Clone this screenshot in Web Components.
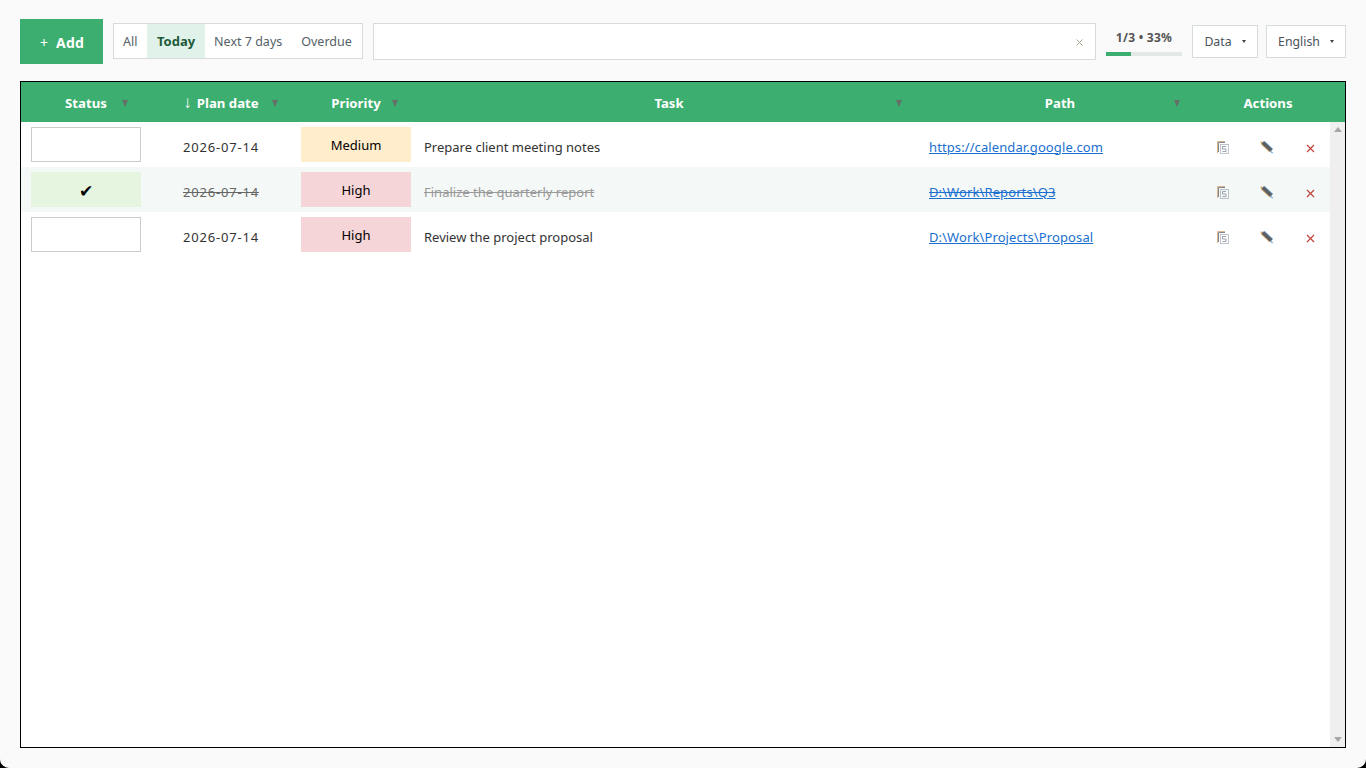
<!DOCTYPE html>
<html><head><meta charset="utf-8">
<style>
html,body{margin:0;height:100%;background:#000;overflow:hidden}
body{font:13px "Noto Sans","Open Sans",sans-serif;color:#333}
</style></head><body>
<todo-app></todo-app>
<template id="t-app"><style>
:host{display:flex;flex-direction:column;height:768px;box-sizing:border-box;background:#fafafa;padding:19px 20px 20px;border-radius:0 0 9px 9px;gap:17px}
.bar{display:flex;align-items:center;height:45px}
.add{width:83px;height:45px;background:#3cae6f;color:#fff;font-weight:700;font-size:14px;display:flex;align-items:center;justify-content:center;margin-right:10px;letter-spacing:.2px;padding:2px 0 0 1px;box-sizing:border-box;gap:8px}
.add span{font-weight:400}
.filters{display:flex;height:36px;box-sizing:border-box;border:1px solid #d6dbdb;background:#fff;margin-right:10px;margin-top:-1px;line-height:35px;font-size:12.5px;color:#555f66;width:250px}
.filters span{padding:0 9.5px;white-space:nowrap}
.filters span:first-child{padding:0 10px 0 9px}
.filters .on{background:#e0f2e9;color:#1d5a3a;font-weight:700;font-size:13px;padding:0 9.5px}
.search{width:723px;height:37px;box-sizing:border-box;border:1px solid #d6dbdb;background:#fff;margin-right:10px;display:flex;align-items:center;justify-content:flex-end;padding:2px 12px 0 0;margin-top:-1px}
.prog{width:76px;margin-right:10px;display:flex;flex-direction:column;align-items:center;margin-top:1px}
.prog b{font-size:12px;letter-spacing:.25px;color:#555;line-height:18px;margin-bottom:5px;font-weight:700;white-space:nowrap}
.track{width:76px;height:4px;background:#e3e8e6}.fill{width:25px;height:4px;background:#3cae6f}
.drop{height:33px;box-sizing:border-box;border:1px solid #d6dbdb;background:#fff;display:flex;align-items:center;justify-content:center;gap:10px;font-size:12.3px;color:#4a5258;margin-top:-1px;padding-top:1px}
.drop i{width:0;height:0;border:2px solid transparent;border-top:3px solid #444;border-bottom:0}
.d1{width:66px;margin-right:8px}.d2{width:80px}
</style>
<div class="bar">
<div class="add"><span>+</span>Add</div>
<div class="filters"><span>All</span><span class="on">Today</span><span>Next 7 days</span><span>Overdue</span></div>
<div class="search"><svg width="7" height="7" viewBox="0 0 7 7"><path d="M.5.5l6 6M6.500.5l-6 6" stroke="#a8a294" stroke-width="1" fill="none"/></svg></div>
<div class="prog"><b>1/3 • 33%</b><div class="track"><div class="fill"></div></div></div>
<div class="drop d1">Data<i></i></div>
<div class="drop d2">English<i></i></div>
</div>
<task-table></task-table>
</template>
<template id="t-table"><style>
:host{display:flex;flex-direction:column;height:667px;box-sizing:border-box;border:1px solid #000;background:#fff}
.head{display:grid;grid-template-columns:130px 140px 130px 496px 286px 130px;height:40px;background:#3cae6f;color:#fff;font-weight:700;font-size:13.2px;flex:none;width:1324px}
.head div{position:relative;display:flex;align-items:center;justify-content:center;padding-top:2px;box-sizing:border-box}
.head .arr{font-weight:400;font-size:17px;line-height:1;margin-right:5px;margin-top:-2px;font-family:"Liberation Sans",sans-serif}
.head i{position:absolute;top:18px;width:0;height:0;border:3.5px solid transparent;border-top:7px solid #646f69;border-bottom:0}
.body{flex:1;display:flex;min-height:0}
.rows{flex:1;min-width:0}
.sb{width:15px;background:#efefef;display:flex;flex-direction:column;justify-content:space-between;align-items:center;padding:5px 0;box-sizing:border-box}
.sb i{width:0;height:0;border:4px solid transparent}
.sb .u{border-bottom:5px solid #a6a6a6;border-top:0}.sb .d{border-top:5px solid #a6a6a6;border-bottom:0}
</style>
<div class="head">
<div>Status<i style="right:23px"></i></div>
<div><span class="arr">↓</span>Plan date<i style="right:13px"></i></div>
<div>Priority<i style="right:23px"></i></div>
<div>Task<i style="right:15px"></i></div>
<div>Path<i style="right:23px"></i></div>
<div>Actions</div>
</div>
<div class="body"><div class="rows">
<task-row date="2026-07-14" prio="Medium" task="Prepare client meeting notes" path="https://calendar.google.com"></task-row>
<task-row done date="2026-07-14" prio="High" task="Finalize the quarterly report" path="D:\Work\Reports\Q3"></task-row>
<task-row date="2026-07-14" prio="High" task="Review the project proposal" path="D:\Work\Projects\Proposal"></task-row>
</div><div class="sb"><i class="u"></i><i class="d"></i></div></div>
</template>
<template id="t-row"><style>
:host{display:grid;grid-template-columns:130px 140px 130px 505px 275px 129px;height:45px;align-items:center;font-size:13px;color:#333}
:host([done]){background:#f4f8f6}
.status{margin-left:10px;width:110px;height:35px;box-sizing:border-box;border:1px solid #ccc;background:#fff;display:flex;align-items:center;justify-content:center;color:#000;font-size:17px;padding-top:1px;line-height:1}
:host([done]) .status{background:#e6f5e0;border-color:#e6f5e0}
.date{text-align:center;padding-top:4px;letter-spacing:.8px}
:host([done]) .date{text-decoration:line-through;color:#666}
.prio{margin-left:10px;width:110px;height:35px;display:flex;align-items:center;justify-content:center;color:#000;box-sizing:border-box}
.Medium{background:#ffedcc}.High{background:#f6d5d8}
.task{padding:4px 0 0 3px}
:host([done]) .task{text-decoration:line-through;color:#999}
.path{padding:4px 0 0 3px;color:#1a6fd0;text-decoration:underline;letter-spacing:.1px}
:host([done]) .path{text-decoration:underline line-through}
.acts{display:flex;align-items:center;padding:5px 0 0 16px}
.acts svg{flex:none;display:block}
</style>
<div class="status"></div><div class="date"></div><div class="prio"></div><div class="task"></div><div class="path"></div>
<div class="acts">
<svg width="12" height="13" viewBox="0 0 12 13" style="margin-right:31px"><path d="M.5 12V.5H8" fill="none" stroke="#d9b48c"/><path d="M1.500 11V1.500H8" fill="none" stroke="#83878c"/><rect x="3.500" y="3.500" width="8" height="9" fill="none" stroke="#7d8a9a" stroke-dasharray="1 1"/><path d="M9 5.500H5.500v2.500H9v2.500H5.500" fill="none" stroke="#9aa2ae"/></svg>
<svg width="14" height="13" viewBox="0 0 14 13" style="margin-right:32px"><path d="M2.800 1.500l8.500 8" stroke="#d9a569" stroke-width="3.800" fill="none" transform="translate(-.6 .3)"/><path d="M2.800 1.500l8.500 8" stroke="#7fb4e0" stroke-width="3.800" fill="none" transform="translate(.6 -.3)"/><path d="M2.800 1.500l8.500 8" stroke="#5b5f64" stroke-width="3.400" fill="none"/><path d="M.5.500l2.500.6L1 3z" fill="#c9965a"/><path d="M11.500 10l2 2.500-2.800-1z" fill="#5a9fd6"/></svg>
<svg width="9" height="9" viewBox="0 0 9 9" style="margin-top:3px"><path d="M1 1l7 7M8 1l-7 7" stroke="#c0453c" stroke-width="1.200" fill="none"/></svg>
</div>
</template>
<script>
function mk(id){const c=class extends HTMLElement{constructor(){super();this.attachShadow({mode:'open'}).appendChild(document.getElementById(id).content.cloneNode(true))}};return c}
customElements.define('todo-app',mk('t-app'));
customElements.define('task-table',mk('t-table'));
customElements.define('task-row',class extends mk('t-row'){connectedCallback(){const s=this.shadowRoot,g=a=>this.getAttribute(a);
s.querySelector('.date').textContent=g('date');const p=s.querySelector('.prio');p.textContent=g('prio');p.classList.add(g('prio'));
s.querySelector('.task').textContent=g('task');s.querySelector('.path').textContent=g('path');
if(this.hasAttribute('done'))s.querySelector('.status').textContent='✔'}});
</script>
</body></html>
